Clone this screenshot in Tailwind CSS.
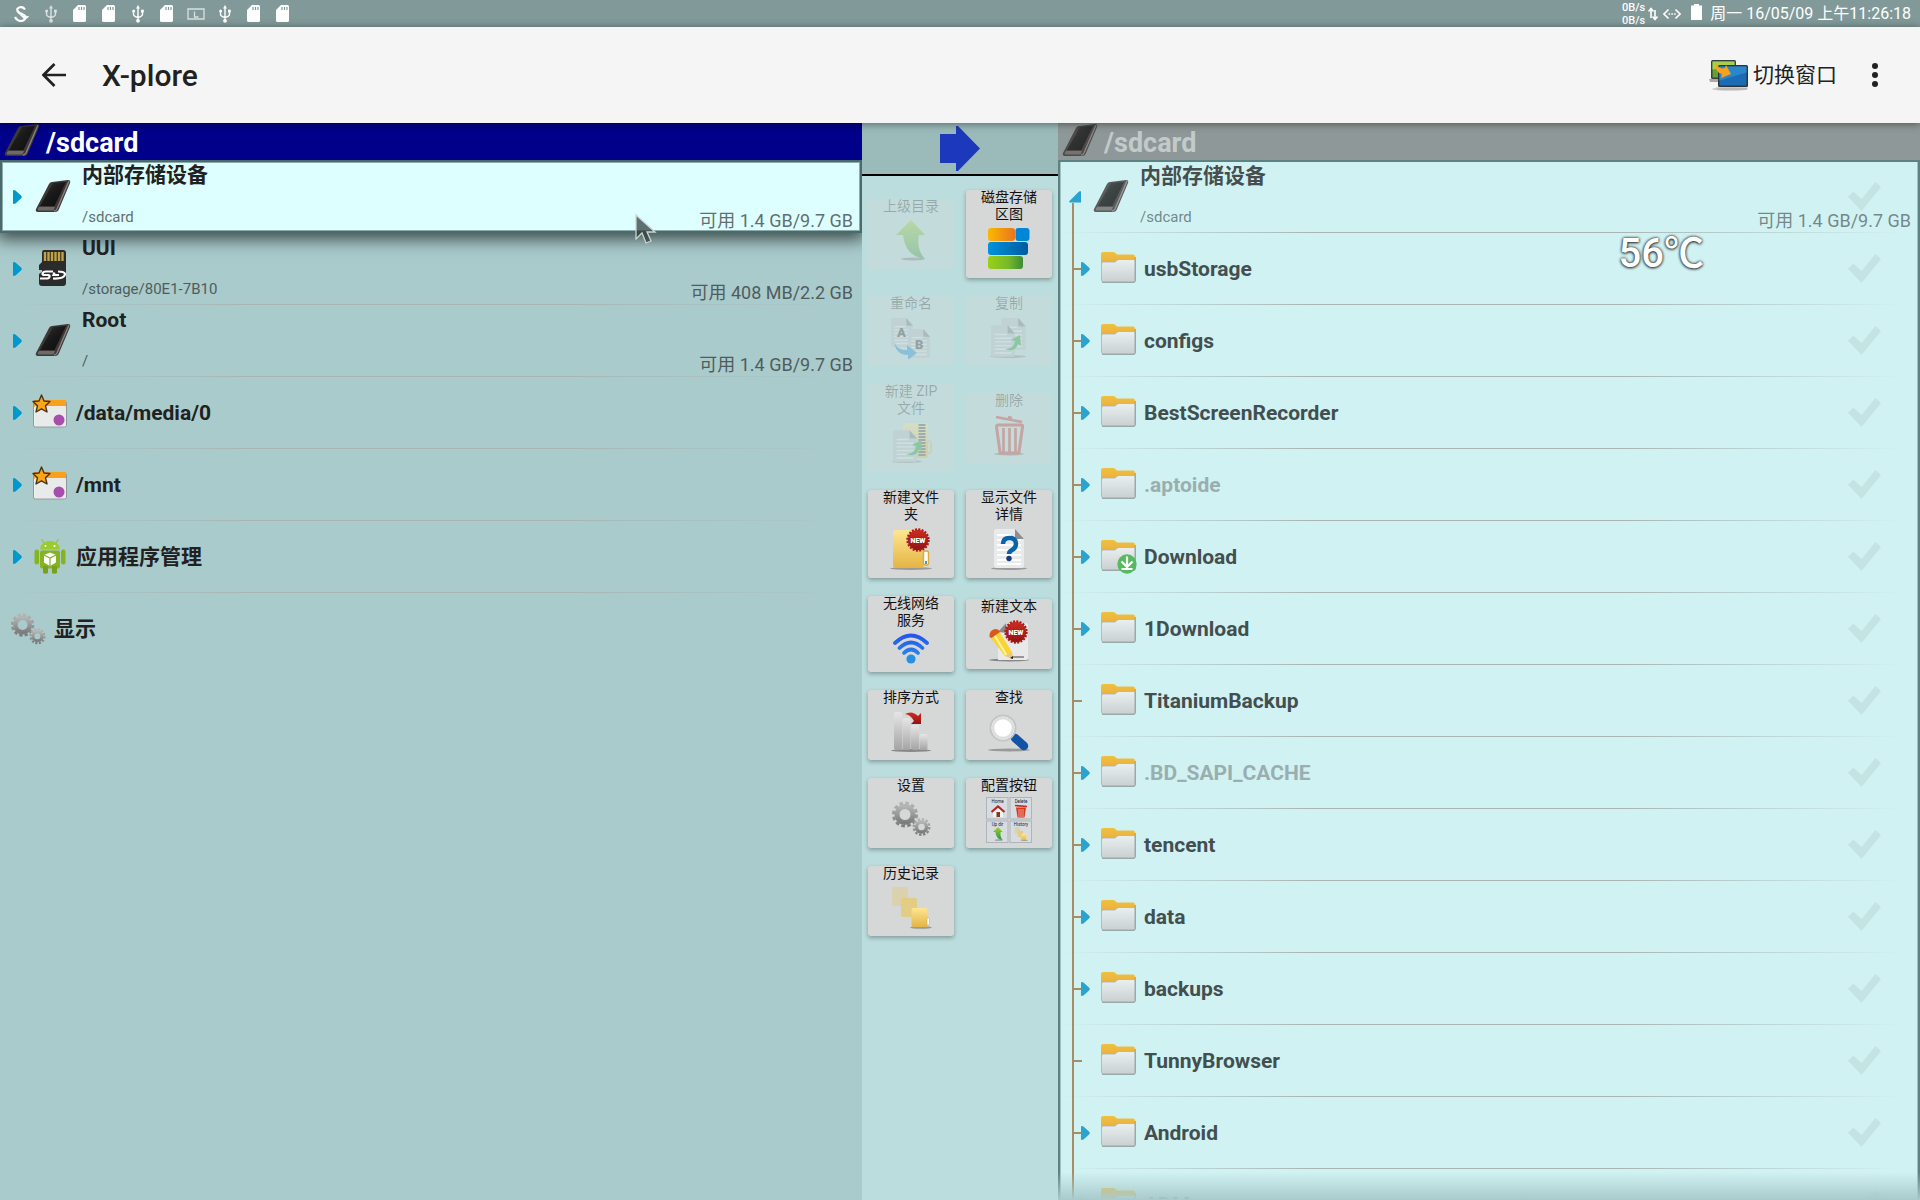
<!DOCTYPE html>
<html lang="zh-CN">
<head>
<meta charset="utf-8">
<meta name="viewport" content="width=device-width, initial-scale=1">
<title>X-plore</title>
<script src="https://cdn.jsdelivr.net/npm/@tailwindcss/browser@4"></script>
</head>
<body class="flex h-screen flex-col overflow-hidden bg-[#a9cbcc] font-[Roboto,'Noto_Sans_CJK_SC',sans-serif] text-[#212121]">

<svg class="absolute h-0 w-0" aria-hidden="true">
  <defs>
    <linearGradient id="gScreen" x1="0" y1="0" x2="1" y2="1"><stop offset="0" stop-color="#3a3a3a"/><stop offset=".45" stop-color="#1a1a1a"/><stop offset="1" stop-color="#0c0c0c"/></linearGradient>
    <linearGradient id="gTab" x1="0" y1="0" x2="0" y2="1"><stop offset="0" stop-color="#f0bf40"/><stop offset="1" stop-color="#e29a3c"/></linearGradient>
    <linearGradient id="gPaper" x1="0" y1="0" x2="0" y2="1"><stop offset="0" stop-color="#eaf0f0"/><stop offset="1" stop-color="#c9d0d1"/></linearGradient>
    <linearGradient id="gBar" x1="0" y1="0" x2="0" y2="1"><stop offset="0" stop-color="#e6e6e6"/><stop offset="1" stop-color="#a4a4a4"/></linearGradient>
    <linearGradient id="gGear" x1="0" y1="0" x2="0" y2="1"><stop offset="0" stop-color="#b4b4b4"/><stop offset="1" stop-color="#7c7c7c"/></linearGradient>
    <linearGradient id="gFold" x1="0" y1="0" x2="0" y2="1"><stop offset="0" stop-color="#fde692"/><stop offset="1" stop-color="#e5b443"/></linearGradient>
    <linearGradient id="gGreen" x1="0" y1="0" x2="0" y2="1"><stop offset="0" stop-color="#a2d02c"/><stop offset="1" stop-color="#27963a"/></linearGradient>
    <linearGradient id="gRed" x1="0" y1="0" x2="0" y2="1"><stop offset="0" stop-color="#d22a22"/><stop offset="1" stop-color="#8e1414"/></linearGradient>
    <linearGradient id="gBlue" x1="0" y1="0" x2="1" y2="0"><stop offset="0" stop-color="#0093dd"/><stop offset="1" stop-color="#005a9f"/></linearGradient>
    <linearGradient id="gOrange" x1="0" y1="0" x2="1" y2="0"><stop offset="0" stop-color="#fbb900"/><stop offset="1" stop-color="#e8761e"/></linearGradient>
    <linearGradient id="gLime" x1="0" y1="0" x2="1" y2="0"><stop offset="0" stop-color="#9bd018"/><stop offset=".6" stop-color="#76b82a"/><stop offset="1" stop-color="#3d8b37"/></linearGradient>
    <linearGradient id="gWifi" x1="0" y1="0" x2="0" y2="30" gradientUnits="userSpaceOnUse"><stop offset="0" stop-color="#2450ee"/><stop offset="1" stop-color="#2a98e8"/></linearGradient>
  </defs>

  <symbol id="phone" viewBox="0 0 36 34">
    <path d="M17 3 33 1q3 0 2 3L24 30q-1 3-4 3H3q-3 0-2-3L14 5q1-2 3-2z" fill="#3e3837"/>
    <path d="M34 2 22 30q-1 2-3 2" fill="none" stroke="#8a8280" stroke-width="1.4"/>
    <path d="M18 4 31 3 19.500 27H5z" fill="url(#gScreen)"/>
    <path d="M4 28 20 28 18.500 31.500H4q-2 0-1-2z" fill="#6f6967"/>
  </symbol>
  <symbol id="tri" viewBox="0 0 9 14"><path d="M0 1q0-1 1-1 1 0 2 1l5 4.500q1.500 1.500 0 3L3 13q-1 1-2 1-1 0-1-1z" fill="currentColor"/></symbol>
  <symbol id="tri-open" viewBox="0 0 12 12"><path d="M11 0q1 0 1 1v10.500H1q-1.500-.5-.5-1.500L9.500 1z" fill="currentColor"/></symbol>
  <symbol id="sdcard" viewBox="0 0 27 36">
    <path d="M5 0h19q3 0 3 3v30q0 3-3 3H3q-3 0-3-3V24l3-2v-2H0v-5l3-3V3q0-3 2-3z" fill="#2b2b2b"/>
    <path d="M6 2v9M9.500 2v9M13 2v9M16.500 2v9M20 2v9M23.500 2v9" stroke="#c2a447" stroke-width="2.400"/>
    <path d="M14 21.500H7q-3 0-3.500 2.200 0 1.300 2 1.300h3.500q2 .200 1.500 1.700-.5 1.800-3 1.800H1" fill="none" stroke="#fff" stroke-width="2.200"/>
    <path d="M15.500 22.500 14.500 25H20M14 28.500q11 .500 12-4 0-3-7-3" fill="none" stroke="#fff" stroke-width="2.200"/>
  </symbol>
  <symbol id="fav" viewBox="0 0 36 34">
    <rect x="1.500" y="7" width="33" height="26" rx="2" fill="#f4f4f4" stroke="#8f9a9b"/>
    <path d="M2 12V7q0-1 1-1h30q1 0 1 1v6H2z" fill="#f9a11b"/>
    <rect x="2.500" y="12" width="31.500" height="20" rx="1" fill="#e9ebeb"/>
    <circle cx="27" cy="26" r="5.500" fill="#a74fad"/>
    <path d="M9.500 1 12 7l6 .5-4.500 4.200L15 18l-5.500-3.200L4 18l1.500-6.300L1 7.500 7 7z" fill="#fba519" stroke="#4a3312" stroke-width="1.400" stroke-linejoin="round"/>
  </symbol>
  <symbol id="android" viewBox="0 0 32 36">
    <path d="M10 5 7.500 1M22 5l2.500-4" stroke="#9cb95c" stroke-width="1.200"/>
    <path d="M6 11.500Q7 3 16 3t10 8.500z" fill="#9ccb2e"/><circle cx="11.500" cy="8" r="1" fill="#fff"/><circle cx="20.500" cy="8" r="1" fill="#fff"/>
    <rect x="6" y="12.500" width="20" height="18" rx="2" fill="#86b322"/>
    <rect x=".500" y="11.500" width="4.500" height="15" rx="2.200" fill="#86b322"/><rect x="27" y="11.500" width="4.500" height="15" rx="2.200" fill="#86b322"/>
    <path d="M9 28h5v7q-2.500 1.500-5 0zM18 28h5v7q-2.500 1.500-5 0z" fill="#76a01d"/>
    <path d="M16 14.500 22 17v7.500L16 28l-6-3.500V17z" fill="#fff"/><path d="M10 17l6 3 6-3M16 20v8" fill="none" stroke="#86b322" stroke-width="1.200"/>
  </symbol>
  <symbol id="gears" viewBox="0 0 40 36">
    <g fill="none" stroke="url(#gGear)"><circle cx="14" cy="13.500" r="8" stroke-width="5"/><circle cx="14" cy="13.500" r="11.500" stroke-width="3" stroke-dasharray="3.600 2.420"/>
    <circle cx="30.500" cy="26" r="5" stroke-width="3.400"/><circle cx="30.500" cy="26" r="7.800" stroke-width="2.400" stroke-dasharray="2.400 1.680"/></g>
  </symbol>
  <symbol id="folder" viewBox="0 0 36 32">
    <path d="M1 30V3q0-2 2-2h11l3 2.500h16q2 0 2 2V16H1z" fill="url(#gTab)"/>
    <path d="M1.500 13q0-2 2-2H15l3-2.500h15.500q1.500 0 1.500 1.500v19.500q0 1.500-1.500 1.500h-30q-2 0-2-2z" fill="url(#gPaper)" stroke="#a9b2b3" stroke-width=".8"/>
    <path d="M2 31.300h32q1.300-.2 1.300-1.500V6" fill="none" stroke="#8b9697" stroke-width=".9"/>
  </symbol>
  <symbol id="dl" viewBox="0 0 20 20"><circle cx="10" cy="10" r="9.700" fill="#56bb60"/><path d="M10 2.500v9.500M4.500 7.500 10 13l5.500-5.500M4.500 15h11" fill="none" stroke="#fff" stroke-width="2.200"/></symbol>

  <symbol id="m-usb" viewBox="0 0 12 18"><path d="M6 2v13M1.500 6v3q0 2.500 4.500 3.500M10.500 6v3q0 2.500-4.500 3.500" fill="none" stroke="currentColor" stroke-width="1.400"/><path d="M6 0 8 3.500H4z" fill="currentColor"/><circle cx="6" cy="15.800" r="1.900" fill="currentColor"/><circle cx="1.700" cy="6" r="1.500" fill="currentColor"/><rect x="9" y="4.700" width="2.800" height="2.800" fill="currentColor"/></symbol>
  <symbol id="m-sd" viewBox="0 0 13 17"><path d="M5 0h6.500Q13 0 13 1.500v14q0 1.500-1.500 1.500h-10Q0 17 0 15.500V5z" fill="currentColor"/><path d="M6 2v3M8.500 2v3M11 2v3" stroke="#819a99" stroke-width="1.200"/></symbol>

  <symbol id="b-up" viewBox="0 0 42 42"><ellipse cx="23" cy="39" rx="12" ry="1.500" fill="#777"/><path d="M21 0 35 15h-6q-3 14 6 24-20-3-22-24H6z" fill="url(#gGreen)"/></symbol>
  <symbol id="b-map" viewBox="0 0 42 42"><rect x="0" y="0" width="27" height="13" rx="3" fill="url(#gOrange)"/><rect x="27.500" y="0" width="14" height="13" rx="3" fill="#0086d6"/><rect x="0" y="14" width="40" height="13" rx="3" fill="url(#gBlue)"/><rect x="0" y="28" width="35" height="13" rx="3" fill="url(#gLime)"/></symbol>
  <symbol id="doc" viewBox="0 0 26 34"><path d="M2 0h16l8 9v23q0 2-2 2H2q-2 0-2-2V2q0-2 2-2z" fill="#b9c0c5"/><path d="M4 10h13M4 14h18M4 18h18M4 22h18M4 26h18M4 30h18" stroke="#eee" stroke-width="1.500"/><path d="M18 0l8 9h-6q-2 0-2-2z" fill="#707478"/></symbol>
  <symbol id="b-ren" viewBox="0 0 42 42"><use href="#doc" x="1" y="1" width="22" height="29"/><use href="#doc" x="18" y="12" width="22" height="29"/><g font-family="Roboto" font-weight="900" font-size="13" fill="#222"><text x="7" y="20">A</text><text x="25" y="32">B</text></g><path d="M4 25q4 9 13 8v-5l10 8-9 7v-5Q6 38 4 25z" fill="#0a84dd"/></symbol>
  <symbol id="b-copy" viewBox="0 0 42 42"><ellipse cx="20" cy="39.500" rx="18" ry="1.500" fill="#888"/><use href="#doc" x="13" y="1" width="25" height="32"/><use href="#doc" x="3" y="8" width="24" height="32"/><path d="M17 32q9 0 10-8l-4-1 9-5 1 11-3-2q-3 9-13 5z" fill="#0f9a28"/></symbol>
  <symbol id="b-zip" viewBox="0 0 42 42"><path d="M13 1h22q3 0 3 3v30q0 2-3 2H13z" fill="url(#gFold)"/><rect x="37" y="19" width="4" height="12" rx="2" fill="none" stroke="#e5b443" stroke-width="1.500"/><path d="M32 2v32" stroke="#444" stroke-width="7" stroke-dasharray="2 1"/><ellipse cx="17" cy="39.500" rx="15" ry="1.500" fill="#888"/><use href="#doc" x="3" y="8" width="24" height="32"/><path d="M16 32q9 0 10-8l-4-1 9-5 1 11-3-2q-3 9-13 5z" fill="#0f9a28"/></symbol>
  <symbol id="b-del" viewBox="0 0 42 42"><ellipse cx="21" cy="40" rx="15" ry="1.500" fill="#777"/><path d="M8 3 34 8M20 3l4 1" stroke="#c8281f" stroke-width="2.600" fill="none"/><path d="M10 11h23q2 0 1.500 2L31 38q0 1-1 1H13q-1 0-1-1L8.500 13q0-2 1.500-2z" fill="none" stroke="#c8281f" stroke-width="3"/><path d="M15.500 14v24M21.500 14v24M27.500 14v24" stroke="#c8281f" stroke-width="2.600"/></symbol>
  <symbol id="badge" viewBox="0 0 24 24"><circle cx="12" cy="12" r="10.300" fill="url(#gRed)"/><circle cx="12" cy="12" r="10.600" fill="none" stroke="#a81b19" stroke-width="2.200" stroke-dasharray="2 1.330"/><text x="12" y="14.800" text-anchor="middle" font-family="Roboto" font-weight="900" font-size="7" fill="#fff">NEW</text></symbol>
  <symbol id="b-new" viewBox="0 0 42 42"><ellipse cx="21" cy="40.500" rx="21" ry="1.500" fill="#999"/><path d="M6 2h24q4 0 4 4v30q0 4-4 4H6q-3 0-3-3V5q0-3 3-3z" fill="url(#gFold)"/><rect x="33.500" y="23" width="5" height="14" rx="2" fill="#fff" stroke="#dda93c" stroke-width="1.400"/><path d="M36 33v3" stroke="#28a4e0" stroke-width="2"/><use href="#badge" x="16" y="0" width="24" height="24"/></symbol>
  <symbol id="b-info" viewBox="0 0 42 42"><ellipse cx="21" cy="40.500" rx="18" ry="1.500" fill="#999"/><path d="M8 1h19l9 10v27q0 2-2 2H8q-2 0-2-2V3q0-2 2-2z" fill="#e9eaec"/><path d="M9 7h14M9 12h24M9 17h24M9 22h24M9 27h24M9 32h24M9 36h24" stroke="#fff" stroke-width="2"/><path d="M27 1l9 10h-7q-2 0-2-2z" fill="#8c8e90"/><path d="M15 16q0-6 6.500-6t6.500 6q0 4-4 6-3 1.500-3 4" fill="none" stroke="#0a62a9" stroke-width="4.500"/><circle cx="21" cy="30.500" r="2.700" fill="#163a7b"/></symbol>
  <symbol id="b-wifi" viewBox="0 0 42 32"><g fill="none" stroke="url(#gWifi)" stroke-width="3.800" stroke-linecap="round"><path d="M5 10Q21-5 37 10"/><path d="M9.500 15Q21 4 32.500 15"/><path d="M14 20Q21 13 28 20"/></g><circle cx="21" cy="26" r="4.600" fill="#2591e5"/></symbol>
  <symbol id="b-txt" viewBox="0 0 42 42"><ellipse cx="21" cy="40" rx="20" ry="1.500" fill="#888"/><path d="M18 3h20q2 0 2 2v33q0 2-2 2H10V12z" fill="#e9e9ea"/><path d="M18 3 10 12l9 1z" fill="#8a8a8a"/><path d="M24 37h12" stroke="#444"/><path d="M2 17 11 11 24 32l1 7-8-3z" fill="#f9d532"/><path d="M6 14.500 19 36" stroke="#fff2a0" stroke-width="2"/><path d="M1.500 17Q1 10 7 9q4 0 5 3l-8.500 6z" fill="#d9591d"/><path d="M17 36l7-4 1 7z" fill="#e9c491"/><path d="M22 38l3-2v3z" fill="#222"/><use href="#badge" x="16" y="0" width="24" height="24"/></symbol>
  <symbol id="b-sort" viewBox="0 0 42 42"><ellipse cx="21" cy="39.500" rx="20" ry="1.500" fill="#888"/><g fill="url(#gBar)"><rect x="4" y="1" width="8" height="38" rx="2"/><rect x="12.500" y="7" width="8" height="32" rx="2"/><rect x="21" y="14" width="8" height="25" rx="2"/><rect x="29.500" y="23" width="8" height="16" rx="2"/></g><path d="M15 3Q22-1 28 5l3-3v11H21l3-3q-3-6-9-7z" fill="url(#gRed)"/></symbol>
  <symbol id="b-find" viewBox="0 0 42 42"><ellipse cx="21" cy="39" rx="21" ry="1.500" fill="#999"/><path d="M27 27 36 35" stroke="#1353a6" stroke-width="8.500" stroke-linecap="round"/><circle cx="15" cy="17" r="12.500" fill="#fafafa" stroke="#c2c4c5" stroke-width="2"/><circle cx="15" cy="17" r="10" fill="#fff" stroke="#dcdedf" stroke-width="2.500"/></symbol>
  <symbol id="hist" viewBox="0 0 42 42"><rect x="2" y="0" width="16" height="19" rx="2" fill="#dccf9f" opacity=".75"/><rect x="11" y="11" width="16" height="19" rx="2" fill="#e3cc83"/><ellipse cx="31" cy="40.500" rx="11" ry="1.300" fill="#999"/><rect x="21.500" y="21" width="16" height="19" rx="2" fill="url(#gFold)"/><rect x="37" y="31" width="2.500" height="7" rx="1" fill="#fff" stroke="#dda93c" stroke-width=".6"/></symbol>
  <symbol id="b-conf" viewBox="0 0 46 46"><g fill="#d6dce0" stroke="#adb5ba"><rect x=".5" y=".5" width="21.500" height="21.500"/><rect x="24" y=".5" width="21.500" height="21.500"/><rect x=".5" y="24" width="21.500" height="21.500"/><rect x="24" y="24" width="21.500" height="21.500"/></g><g font-family="Roboto" font-size="4.500" text-anchor="middle" fill="#222"><text x="11.500" y="5.500">Home</text><text x="35" y="5.500">Delete</text><text x="11.500" y="29">Up dir</text><text x="35" y="29">History</text></g><path d="M7 14v6h10v-6l-5-4z" fill="#f4f4f4"/><path d="M5.500 15 12 9.500l6.500 5.500" fill="none" stroke="#b92420" stroke-width="2.200"/><rect x="10.500" y="15" width="3.500" height="5" fill="#7b3a22"/><path d="M30 10.500h10l-1.500 10h-7z" fill="#d8391f"/><path d="M33 12v8M35 12v8M37 12v8" stroke="#f6b9a8" stroke-width=".8"/><path d="M29 8.500 41 9.500" stroke="#c8281f" stroke-width="1.600"/><use href="#b-up" x="5" y="30" width="14" height="14"/><use href="#hist" x="28" y="30" width="14" height="14"/></symbol>
</svg>

<!-- System status bar -->
<div class="flex h-[27px] shrink-0 items-center bg-[#819a99] pl-[7px] pr-[9px] text-white">
  <div class="flex items-center">
    <span class="flex w-[29px] justify-center"><svg class="h-4 w-[15px]" viewBox="0 0 15 16"><path d="M11 3.500Q9 .5 6 1.200 2.500 2 3.500 5q.8 1.800 4.500 3 5 1.800 3 5-2.500 3-6.500 1.500Q2 13.500 1 11" fill="none" stroke="currentColor" stroke-width="2.200"/><path d="M3 6q5 5 12 4-1 3-5 3z" fill="currentColor"/></svg></span>
    <span class="flex w-[29px] justify-center opacity-70"><svg class="h-[18px] w-3"><use href="#m-usb"/></svg></span>
    <span class="flex w-[29px] justify-center"><svg class="h-[17px] w-[13px]"><use href="#m-sd"/></svg></span>
    <span class="flex w-[29px] justify-center"><svg class="h-[17px] w-[13px]"><use href="#m-sd"/></svg></span>
    <span class="flex w-[29px] justify-center"><svg class="h-[18px] w-3"><use href="#m-usb"/></svg></span>
    <span class="flex w-[29px] justify-center"><svg class="h-[17px] w-[13px]"><use href="#m-sd"/></svg></span>
    <span class="flex w-[29px] justify-center opacity-70"><svg class="h-3 w-[18px]" viewBox="0 0 18 12"><path d="M1 1h16v10H1zM7.500 3.500v5.500h4" fill="none" stroke="currentColor" stroke-width="1.300"/></svg></span>
    <span class="flex w-[29px] justify-center"><svg class="h-[18px] w-3"><use href="#m-usb"/></svg></span>
    <span class="flex w-[29px] justify-center"><svg class="h-[17px] w-[13px]"><use href="#m-sd"/></svg></span>
    <span class="flex w-[29px] justify-center"><svg class="h-[17px] w-[13px]"><use href="#m-sd"/></svg></span>
  </div>
  <div class="ml-auto flex items-center">
    <div class="text-[11px] font-medium leading-[13px]">0B/s<br>0B/s</div>
    <svg class="ml-[3px] h-[14px] w-[10px]" viewBox="0 0 10 14"><path d="M3 11V2M.500 4.500 3 1.500l2.500 3M7 3v9M4.500 9.500 7 12.500l2.500-3" fill="none" stroke="currentColor" stroke-width="1.600"/></svg>
    <svg class="ml-[5px] h-3 w-[18px]" viewBox="0 0 18 12"><path d="M5.500 1.500 1 6l4.500 4.500M12.500 1.500 17 6l-4.500 4.500" fill="none" stroke="currentColor" stroke-width="1.600"/><path d="M5.500 6h8" stroke="currentColor" stroke-width="1.600" stroke-dasharray="1.600 1.200"/></svg>
    <svg class="mb-[3px] ml-[10px] h-4 w-[11px]" viewBox="0 0 11 16"><path d="M3 0h5v1.500h3V16H0V1.500h3z" fill="currentColor"/></svg>
    <span class="ml-2 text-[16px] leading-6">周一 16/05/09 上午11:26:18</span>
  </div>
</div>

<!-- App bar -->
<header class="relative z-20 flex h-24 shrink-0 items-center bg-[#f5f5f5] pl-[42px] pr-[39px] shadow-[0_1px_8px_rgba(0,0,0,0.45)]">
  <button type="button" aria-label="返回"><svg class="h-6 w-6" viewBox="0 0 24 24"><path d="M24 12H2.500M12.500 1 1.500 12l11 11" fill="none" stroke="#212121" stroke-width="2.700"/></svg></button>
  <h1 class="ml-9 pt-px text-[30px] font-medium leading-9">X-plore</h1>
  <button type="button" class="ml-auto flex items-center gap-1 text-[21px] leading-8">
    <svg class="h-8 w-10" viewBox="0 0 40 32"><ellipse cx="21" cy="30" rx="18" ry="1.800" fill="#ccc"/><path d="M0 20h10v3H1z" fill="#aaa"/><rect x="2" y="1" width="25" height="19" rx="1.500" fill="#3a3f40"/><rect x="3.500" y="2.500" width="22" height="16" fill="#5fa334"/><path d="M3.500 2.500h22v5l-22 3z" fill="#a3d14e"/><rect x="9" y="6" width="30" height="22" rx="1.500" fill="#2f3436"/><rect x="10.500" y="7.500" width="27" height="19" fill="#1c6cb5"/><path d="M10.500 7.500h27v6l-27 8z" fill="#2b86cc"/><path d="M7 28.500h32l-2 2.500H9z" fill="#b7b9ba"/><path d="M7 4q3 7 9 5l1-3 5 9-10 4 1-4Q5 13 7 4z" fill="#f7a21c"/></svg>
    <span>切换窗口</span>
  </button>
  <button type="button" aria-label="更多选项" class="ml-[32px] flex w-3 justify-center"><svg class="h-6 w-[6px]" viewBox="0 0 6 24"><circle cx="3" cy="3" r="3" fill="#212121"/><circle cx="3" cy="12" r="3" fill="#212121"/><circle cx="3" cy="21" r="3" fill="#212121"/></svg></button>
</header>

<main class="grid min-h-0 grow grid-cols-[1fr_196px_1fr]">
  <!-- Active pane -->
  <section class="flex min-h-0 min-w-0 flex-col overflow-hidden">
    <h2 class="relative z-10 flex h-[37px] shrink-0 items-center gap-[6px] bg-[#00008b] pl-1 pt-[2px] text-[27px] font-bold leading-9 text-white"><svg class="mb-[6px] h-[34px] w-9"><use href="#phone"/></svg>/sdcard</h2>
    <ul id="left"></ul>
  </section>

  <!-- Button bar -->
  <section class="min-h-0 overflow-hidden bg-[#bbdddd]">
    <button type="button" aria-label="切换到另一窗格" class="flex h-[53px] w-full items-center justify-center border-b-2 border-black bg-[#9bbaba]"><svg class="h-[45px] w-10" viewBox="0 0 40 45"><path d="M0 8h16V0h2l22 22.500L18 45h-2v-8H0z" fill="#1c39bb"/></svg></button>
    <div id="tools" class="grid grid-cols-[86px_86px] items-center justify-center gap-x-3 gap-y-[18px] pt-[14px]"></div>
  </section>

  <!-- Inactive pane -->
  <section class="relative flex min-h-0 min-w-0 flex-col overflow-hidden">
    <h2 class="flex h-[37px] shrink-0 items-center gap-[6px] bg-[#8f9898] pl-1 pt-[2px] text-[27px] font-bold leading-9 text-[#c3caca]"><svg class="mb-[6px] h-[34px] w-9 opacity-80"><use href="#phone"/></svg>/sdcard</h2>
    <ul id="right" class="min-h-0 grow overflow-hidden border-x-2 border-t border-[#5c8282] bg-[#d0f2f3] shadow-[inset_0_1px_0_0_#5c8282,inset_1px_0_0_0_#a2c1c1,inset_-1px_0_0_0_#a2c1c1]"></ul>
    <div class="absolute inset-x-0 bottom-0 h-7 bg-linear-to-b from-transparent to-[#a9cacb]"></div>
  </section>
</main>

<!-- Floating temperature read-out -->
<div class="pointer-events-none absolute right-[216px] top-[230px] z-20 text-[40px] font-medium leading-[48px] text-white [text-shadow:0_0_3px_#000,0_1px_3px_#555]">56℃</div>
<!-- Pointer -->
<svg class="pointer-events-none absolute left-[634px] top-[213px] z-20 h-8 w-6" viewBox="0 0 24 32"><path d="M2 2v24l6-6 4 10 5-2-4-9h8z" fill="#333f3f" fill-opacity=".75" stroke="#c9d6d6" stroke-width="1.300"/></svg>

<script>
const svg = (id, cls) => `<svg class="${cls}" aria-hidden="true"><use href="#${id}"/></svg>`;
const ROW = "relative flex h-[72px] items-center bg-[linear-gradient(90deg,transparent,#a9b4b4_30%,#a9b4b4_65%,transparent_98%)] bg-[length:100%_1px] bg-bottom bg-no-repeat";

const storage = (name, path, free, lead) => `${lead}
  <div class="flex h-full flex-col justify-between pb-[5px]">
    <span class="text-[21px] font-bold leading-[30px]">${name}</span>
    <span class="text-[15px] leading-[22px] opacity-65">${path}</span>
  </div>
  <span class="ml-auto self-end pb-px pr-[9px] text-[18px] leading-[22px] opacity-65">${free}</span>`;

const tri = svg("tri", "ml-[13px] h-[14px] w-[9px] text-[#0099cc]");
const lead = svg("phone", "mb-[2px] ml-[13px] mr-[11px] h-[34px] w-9");
const leftRows = [
  storage("UUI", "/storage/80E1-7B10", "可用 408 MB/2.2 GB", tri + svg("sdcard", "mb-[2px] ml-[17px] mr-[16px] h-9 w-[27px]")),
  storage("Root", "/", "可用 1.4 GB/9.7 GB", tri + lead),
  tri + svg("fav", "mb-1 ml-[10px] h-[34px] w-9") + `<span class="ml-2 text-[21px] font-bold leading-[30px]">/data/media/0</span>`,
  tri + svg("fav", "mb-1 ml-[10px] h-[34px] w-9") + `<span class="ml-2 text-[21px] font-bold leading-[30px]">/mnt</span>`,
  tri + svg("android", "mb-[2px] ml-3 h-9 w-8") + `<span class="ml-[10px] text-[21px] font-bold leading-[30px]">应用程序管理</span>`,
];
document.getElementById("left").innerHTML =
  `<li class="relative flex h-[73px] items-center bg-[#ddffff] shadow-[inset_0_0_0_2px_#4a6b6b,inset_0_0_0_3px_#8eaaaa,0_3px_16px_3px_rgba(0,0,0,0.65)]">
    ${storage("内部存储设备", "/sdcard", "可用 1.4 GB/9.7 GB", tri + lead)}</li>`
  + leftRows.map(r => `<li class="${ROW}">${r}</li>`).join("")
  + `<li class="flex h-[72px] items-center">${svg("gears", "ml-[10px] h-[34px] w-9")}<span class="ml-2 text-[21px] font-bold leading-[30px]">显示</span></li>`;

const tools = [
  ["上级目录", "up", "h-[70px]", 1], ["磁盘存储<br>区图", "map", "h-[88px]", 0],
  ["重命名", "ren", "h-[70px]", 1], ["复制", "copy", "h-[70px]", 1],
  ["新建 ZIP<br>文件", "zip", "h-[88px]", 1], ["删除", "del", "h-[70px]", 1],
  ["新建文件<br>夹", "new", "h-[88px]", 0], ["显示文件<br>详情", "info", "h-[88px]", 0],
  ["无线网络<br>服务", "wifi", "h-[76px]", 0], ["新建文本", "txt", "h-[70px]", 0],
  ["排序方式", "sort", "h-[70px]", 0], ["查找", "find", "h-[70px]", 0],
  ["设置", "gears", "h-[70px]", 0], ["配置按钮", "conf", "h-[70px]", 0],
  ["历史记录", "hist", "h-[70px]", 0],
];
const sizes = { wifi: "mt-1 h-8 w-[42px]", conf: "mt-[3px] h-[46px] w-[46px]", gears: "mt-[7px] h-9 w-10" };
document.getElementById("tools").innerHTML = tools.map(([t, i, h, off]) =>
  `<button type="button" ${off ? "disabled" : ""} class="${h} flex w-full flex-col items-center rounded-[3px] bg-[#d6d7d7] text-[14px] leading-[17px] text-[#111] shadow-[0_2px_4px_rgba(0,0,0,0.3)] disabled:bg-[#d6d7d7]/35 disabled:text-[#111]/25 disabled:shadow-none disabled:*:[svg]:opacity-30">
    <span class="-mt-px">${t}</span>${svg(i === "gears" || i === "hist" ? i : "b-" + i, sizes[i] || "mt-[5px] h-[42px] w-[42px]")}</button>`).join("");

const folders = [["usbStorage", 1], ["configs", 1], ["BestScreenRecorder", 1], [".aptoide", 1, "dim"], ["Download", 1, "dl"], ["1Download", 1], ["TitaniumBackup", 0], [".BD_SAPI_CACHE", 1, "dim"], ["tencent", 1], ["data", 1], ["backups", 1], ["TunnyBrowser", 0], ["Android", 1], ["ADM", 1]];
const check = n => `<input type="checkbox" aria-label="选择 ${n}" class="absolute right-[37px] top-[21px] h-[29px] w-[33px] appearance-none bg-[#c4e3e3] [clip-path:polygon(0_51%,16%_33%,41%_59%,83%_0,100%_17%,41%_100%)]">`;
document.getElementById("right").innerHTML =
  `<li class="${ROW} text-[#212121]/80">${svg("tri-open", "ml-[9px] h-3 w-3 text-[#2ba3cf]")}<i class="absolute left-3 top-[42px] h-[30px] w-[2px] bg-[#a88c66]"></i>
   ${storage("内部存储设备", "/sdcard", "可用 1.4 GB/9.7 GB", svg("phone", "mb-[2px] ml-3 mr-[11px] h-[34px] w-9 opacity-80")).replace("pr-[9px]", "pr-[7px]")}${check("/sdcard")}</li>`
  + folders.map(([n, kids, k]) => `<li class="${ROW}">
    <i class="absolute left-3 top-0 h-full w-[2px] bg-[#a88c66]"></i>
    <span class="ml-[14px] h-[2px] w-2 bg-[#a88c66]"></span>
    ${svg("tri", (kids ? "visible" : "invisible") + " -ml-[1px] h-[14px] w-[9px] text-[#2ba3cf]")}
    <span class="relative mb-1 ml-[10px] h-8 w-9">${svg("folder", "h-8 w-9")}${k === "dl" ? svg("dl", "absolute -bottom-[3px] -right-[1px] h-5 w-5") : ""}</span>
    <span class="${k === "dim" ? "text-[#9aaeae]" : "text-[#434f4f]"} ml-2 text-[21px] font-bold leading-[30px]">${n}</span>${check(n)}</li>`).join("");
</script>
</body>
</html>
